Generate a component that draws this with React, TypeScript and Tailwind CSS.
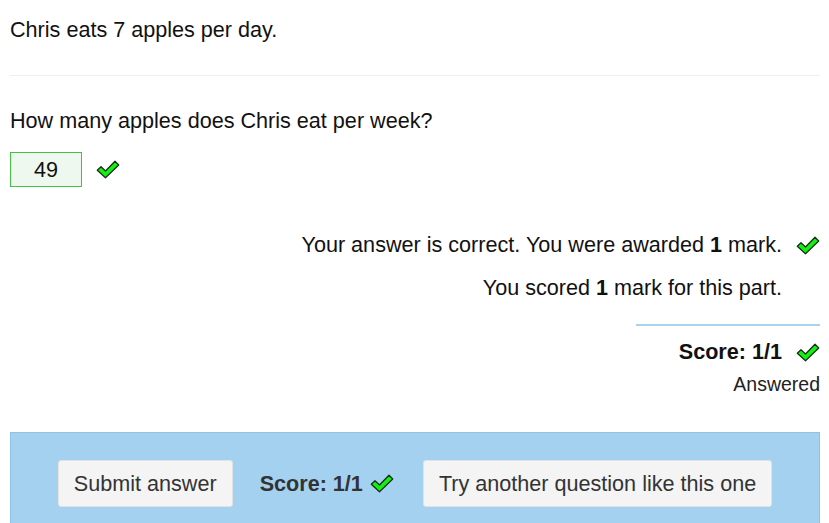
function Tick({ className = '' }: { className?: string }) {
  return (
    <svg viewBox="0 0 24 19" width="24" height="19" className={className}>
      <path
        d="M1.3 10.3 L5 6.7 L9.5 11 L19 1.3 L22.7 5 L9.5 17.7 Z"
        fill="#14f014"
        stroke="#163016"
        strokeWidth="1.3"
        strokeLinejoin="round"
      />
    </svg>
  )
}

function App() {
  return (
    <div className="pl-[10px] pr-[9px] text-[21.6px] leading-[28px] text-[#111] bg-white min-h-[523px] overflow-hidden" style={{ fontFamily: '"Liberation Sans", Arial, sans-serif' }}>
      <p className="pt-[16px]">Chris eats 7 apples per day.</p>
      <hr className="mt-[31px] border-t border-[#eeeeee]" />
      <p className="mt-[31px]">How many apples does Chris eat per week?</p>
      <div className="mt-[17px] flex items-center gap-[14px]">
        <div className="w-[72px] h-[35px] border border-[#44c044] bg-[#eef8ee] flex items-center justify-center">49</div>
        <Tick />
      </div>

      <div className="mt-[44px] flex flex-col items-end">
        <div className="flex items-center gap-[14px] h-[28px]">
          <span>Your answer is correct. You were awarded <b>1</b> mark.</span>
          <Tick />
        </div>
        <div className="mt-[15px] h-[28px] pr-[38px]">
          You scored <b>1</b> mark for this part.
        </div>
        <div className="mt-[22px] w-[184px] border-t-2 border-[#a8d4ee]" />
        <div className="mt-[12px] flex items-center gap-[14px] h-[28px]">
          <b>Score: 1/1</b>
          <Tick />
        </div>
        <div className="mt-[5px] text-[19.5px] leading-[26px] text-[#222]">Answered</div>
      </div>

      <div className="mt-[35px] bg-[#a3d1ef] border border-[#8ec3e6] pt-[27px] pb-[30px] flex items-center justify-center text-[#333]">
        <button className="h-[47px] px-[15px] bg-[#f4f4f4] border border-[#e2e2e2] rounded-[3px]">Submit answer</button>
        <div className="ml-[27px] flex items-center gap-[7px]">
          <b>Score: 1/1</b>
          <Tick />
        </div>
        <button className="ml-[29px] h-[47px] px-[15px] bg-[#f4f4f4] border border-[#e2e2e2] rounded-[3px]">Try another question like this one</button>
      </div>
    </div>
  )
}
export default App
